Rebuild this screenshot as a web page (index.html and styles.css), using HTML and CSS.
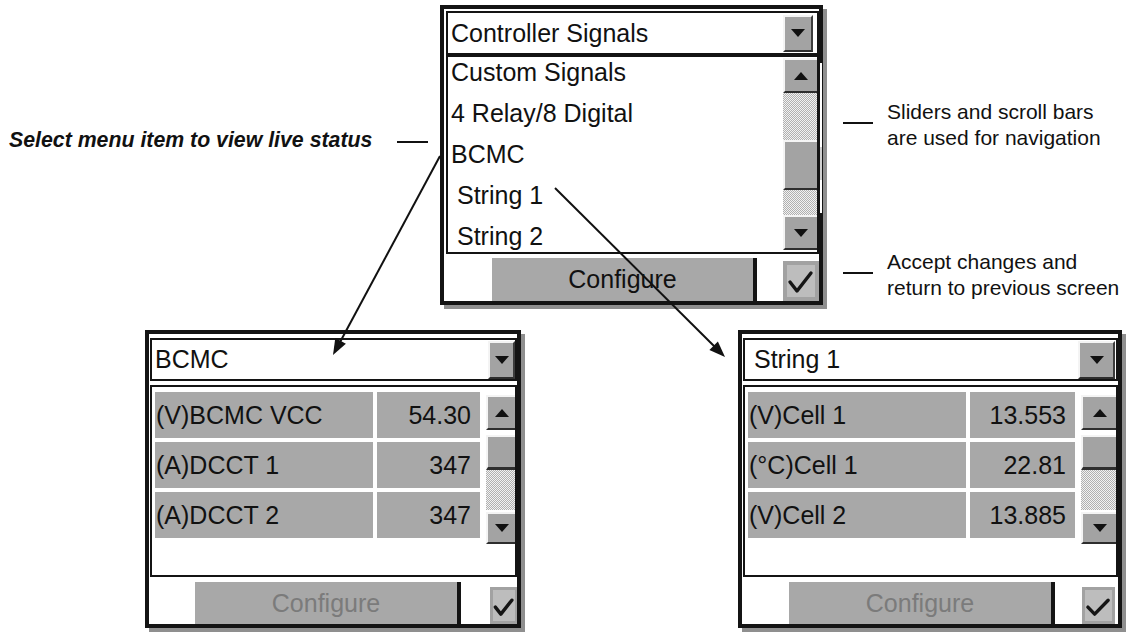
FILE: index.html
```html
<!DOCTYPE html>
<html lang="en">
<head>
<meta charset="utf-8">
<title>Controller Signals</title>
<link rel="stylesheet" href="styles.css">
</head>
<body>
<div class="page">
  <section class="top">
    <div class="note-left">
      <span class="note-left-text">Select menu item to view live status</span>
      <span class="dash"></span>
    </div>

    <div class="win win-top">
      <div class="dd">
        <span class="dd-text">Controller Signals</span>
        <span class="dd-btn"><i class="tri tri-down"></i></span>
      </div>
      <div class="list">
        <ul class="items">
          <li>Custom Signals</li>
          <li>4 Relay/8 Digital</li>
          <li>BCMC</li>
          <li><span class="sp">String 1</span></li>
          <li><span class="sp">String 2</span></li>
        </ul>
        <div class="sb">
          <div class="sb-btn"><i class="tri tri-up"></i></div>
          <div class="track track-a"></div>
          <div class="thumb"></div>
          <div class="track track-b"></div>
          <div class="sb-btn"><i class="tri tri-down"></i></div>
        </div>
      </div>
      <div class="actions">
        <div class="cfg">Configure</div>
        <div class="ok"><svg viewBox="0 0 28 32" preserveAspectRatio="none"><polyline points="3,17 10,26 24,8" fill="none" stroke="#151515" stroke-width="3.4" stroke-linecap="round" stroke-linejoin="round" vector-effect="non-scaling-stroke"/></svg></div>
      </div>
    </div>

    <div class="notes-right">
      <div class="note"><span class="dash"></span><p>Sliders and scroll bars<br>are used for navigation</p></div>
      <div class="note"><span class="dash"></span><p>Accept changes and<br>return to previous screen</p></div>
    </div>
  </section>

  <section class="bottom">
    <div class="win win-bcmc">
      <div class="dd">
        <span class="dd-text">BCMC</span>
        <span class="dd-btn"><i class="tri tri-down"></i></span>
      </div>
      <div class="tbl">
        <div class="rows">
          <div class="row"><span class="cell lab">(V)BCMC VCC</span><span class="cell val">54.30</span></div>
          <div class="row"><span class="cell lab">(A)DCCT 1</span><span class="cell val">347</span></div>
          <div class="row"><span class="cell lab">(A)DCCT 2</span><span class="cell val">347</span></div>
        </div>
        <div class="sb">
          <div class="sb-btn"><i class="tri tri-up"></i></div>
          <div class="thumb"></div>
          <div class="track track-a"></div>
          <div class="sb-btn sb-down"><i class="tri tri-down"></i></div>
        </div>
      </div>
      <div class="actions">
        <div class="cfg cfg-off">Configure</div>
        <div class="ok"><svg viewBox="0 0 28 32" preserveAspectRatio="none"><polyline points="3,17 10,26 24,8" fill="none" stroke="#151515" stroke-width="3.4" stroke-linecap="round" stroke-linejoin="round" vector-effect="non-scaling-stroke"/></svg></div>
      </div>
    </div>

    <div class="win win-str">
      <div class="dd">
        <span class="dd-text"><span class="sp">String 1</span></span>
        <span class="dd-btn"><i class="tri tri-down"></i></span>
      </div>
      <div class="tbl">
        <div class="rows">
          <div class="row"><span class="cell lab">(V)Cell 1</span><span class="cell val">13.553</span></div>
          <div class="row"><span class="cell lab">(°C)Cell 1</span><span class="cell val">22.81</span></div>
          <div class="row"><span class="cell lab">(V)Cell 2</span><span class="cell val">13.885</span></div>
        </div>
        <div class="sb">
          <div class="sb-btn"><i class="tri tri-up"></i></div>
          <div class="thumb"></div>
          <div class="track track-a"></div>
          <div class="sb-btn sb-down"><i class="tri tri-down"></i></div>
        </div>
      </div>
      <div class="actions">
        <div class="cfg cfg-off">Configure</div>
        <div class="ok"><svg viewBox="0 0 28 32" preserveAspectRatio="none"><polyline points="3,17 10,26 24,8" fill="none" stroke="#151515" stroke-width="3.4" stroke-linecap="round" stroke-linejoin="round" vector-effect="non-scaling-stroke"/></svg></div>
      </div>
    </div>
  </section>

  <svg class="arrows" width="1130" height="633" viewBox="0 0 1130 633">
    <line x1="440" y1="156" x2="339" y2="344" stroke="#111" stroke-width="2"/>
    <polygon points="333,355 345.9,343.7 335.3,338.1" fill="#111"/>
    <line x1="555" y1="188" x2="715" y2="347" stroke="#111" stroke-width="2"/>
    <polygon points="725,357 709.4,350.0 717.9,341.5" fill="#111"/>
  </svg>
</div>
</body>
</html>
```

FILE: styles.css
```css
* { box-sizing: border-box; margin: 0; padding: 0; }
html, body { background: #fff; }
body {
  width: 1130px;
  height: 633px;
  overflow: hidden;
  font-family: "Liberation Sans", Arial, Helvetica, sans-serif;
  color: #111;
}
.page { position: relative; width: 1130px; height: 633px; }

/* ---------- top row ---------- */
.top { display: flex; align-items: flex-start; height: 330px; padding-top: 5px; }

.note-left {
  width: 440px;
  flex: none;
  padding: 0 12px 0 9px;
  margin-top: 123px;
  display: flex;
  align-items: center;
}
.note-left-text {
  font-weight: bold;
  font-style: italic;
  font-size: 21.3px;
  line-height: 24px;
  white-space: nowrap;
}
.dash { display: block; width: 31px; height: 2px; background: #111; flex: none; }
.note-left .dash { margin-left: auto; margin-top: 4px; }

.notes-right {
  margin-left: 20px;
  margin-top: 94px;
  display: flex;
  flex-direction: column;
  gap: 98px;
}
.note { display: flex; align-items: flex-start; gap: 14px; font-size: 21px; line-height: 26px; white-space: nowrap; }
.note .dash { width: 30px; margin-top: 23px; }

/* ---------- windows ---------- */
.win {
  border: 4px solid #141414;
  background: #fff;
  box-shadow: 4px 4px 0 #8f8f8f;
  display: flex;
  flex-direction: column;
  flex: none;
}
.win-top { width: 383px; height: 300px; position: relative; }
.win-top::after {
  content: "";
  position: absolute;
  right: -3px;
  top: 54px;
  width: 2px;
  height: 150px;
  background: linear-gradient(#fff 0 84px, #cfcfcf 84px 117px, #fff 117px);
}

.bottom { display: flex; padding-left: 145px; gap: 217px; }
.win-bcmc { width: 376px; height: 298px; }
.win-str { width: 384px; height: 298px; }

/* drop-down */
.dd {
  display: flex;
  align-items: center;
  justify-content: space-between;
  border: 2px solid #141414;
  font-size: 25px;
  flex: none;
}
.win-top .dd { margin: 2px 0 0 2px; height: 44px; }
.win-bcmc .dd, .win-str .dd { margin: 4px 0 0 1px; height: 43px; }
.dd-text { padding-left: 3px; white-space: nowrap; }
.sp { margin-left: 6px; }

.dd-btn, .sb-btn, .thumb {
  background: #a3a3a3;
  border-top: 2px solid #f4f4f4;
  border-left: 2px solid #f4f4f4;
  border-bottom: 2px solid #2e2e2e;
  flex: none;
}
.dd-btn { display: flex; align-items: center; justify-content: center; border-right: 2px solid #3c3c3c; }
.win-top .dd-btn { width: 30px; height: 37px; margin-right: 4px; }
.win-bcmc .dd-btn { width: 27px; height: 38px; }
.win-str .dd-btn { width: 37px; height: 38px; margin-right: 1px; }

.tri { display: block; width: 0; height: 0; border-left: 7px solid transparent; border-right: 7px solid transparent; }
.tri-down { border-top: 8px solid #111; }
.tri-up { border-bottom: 8px solid #111; }

/* list */
.list { display: flex; height: 199px; margin-left: 2px; border: 2px solid #141414; flex: none; }
.items { flex: 1; overflow: hidden; list-style: none; font-size: 25px; line-height: 41px; }
.items li { padding-left: 3px; white-space: nowrap; }
.items li:first-child { margin-top: -5px; }

/* scrollbars */
.sb { display: flex; flex-direction: column; flex: none; }
.sb-btn { display: flex; align-items: center; justify-content: center; height: 35px; }
.track { background: repeating-conic-gradient(#b0b0b0 0 25%, #f2f2f2 0 50%) 0 0 / 2px 2px; flex: none; }
.list .sb { width: 34px; padding-top: 1px; }
.list .track-a { height: 47px; }
.list .thumb { height: 50px; }
.list .track-b { height: 25px; }

/* table */
.tbl {
  display: flex;
  align-items: flex-start;
  margin: 4px 0 0 1px;
  height: 192px;
  border: 2px solid #141414;
  padding: 5px 0 0 3px;
  flex: none;
}
.rows { display: flex; flex-direction: column; gap: 4px; flex: 1; }
.row { display: flex; gap: 4px; height: 46px; font-size: 25px; line-height: 47px; }
.cell { background: #a8a8a8; white-space: nowrap; overflow: hidden; }
.lab { width: 218px; padding-left: 1px; flex: none; }
.val { flex: 1; text-align: right; padding-right: 9px; }
.tbl .sb { margin: 3px 0 0 6px; }
.win-bcmc .tbl .sb { width: 29px; }
.win-str .tbl .sb { width: 35px; }
.tbl .thumb { height: 35px; margin-top: 5px; border-bottom-width: 3px; }
.tbl .track-a { height: 40px; }
.tbl .sb-down { margin-top: 2px; height: 32px; }

/* bottom actions */
.actions { flex: 1; display: flex; align-items: flex-end; }
.cfg {
  height: 43px;
  width: 266px;
  background: #a8a8a8;
  border-right: 4px solid #141414;
  font-size: 25px;
  line-height: 43px;
  text-align: center;
  flex: none;
}
.win-top .cfg { margin-left: 48px; width: 265px; }
.win-bcmc .cfg { margin-left: 46px; height: 42px; line-height: 42px; }
.win-str .cfg { margin-left: 47px; height: 42px; line-height: 42px; }
.cfg-off { color: #7b7b7b; }

.ok { margin-left: auto; display: flex; flex: none; background: #bdbdbd; border: 4px solid #a2a2a2; }
.ok svg { display: block; width: 100%; height: 100%; }
.win-top .ok { width: 36px; height: 40px; }
.win-bcmc .ok { width: 27px; height: 37px; border-width: 3px 2px 3px 3px; }
.win-str .ok { width: 33px; height: 37px; margin-right: 3px; border-width: 3px; }
.win-bcmc .ok svg, .win-str .ok svg { height: 80%; margin-top: 4px; }

/* connector arrows */
.arrows { position: absolute; left: 0; top: 0; pointer-events: none; }
```
